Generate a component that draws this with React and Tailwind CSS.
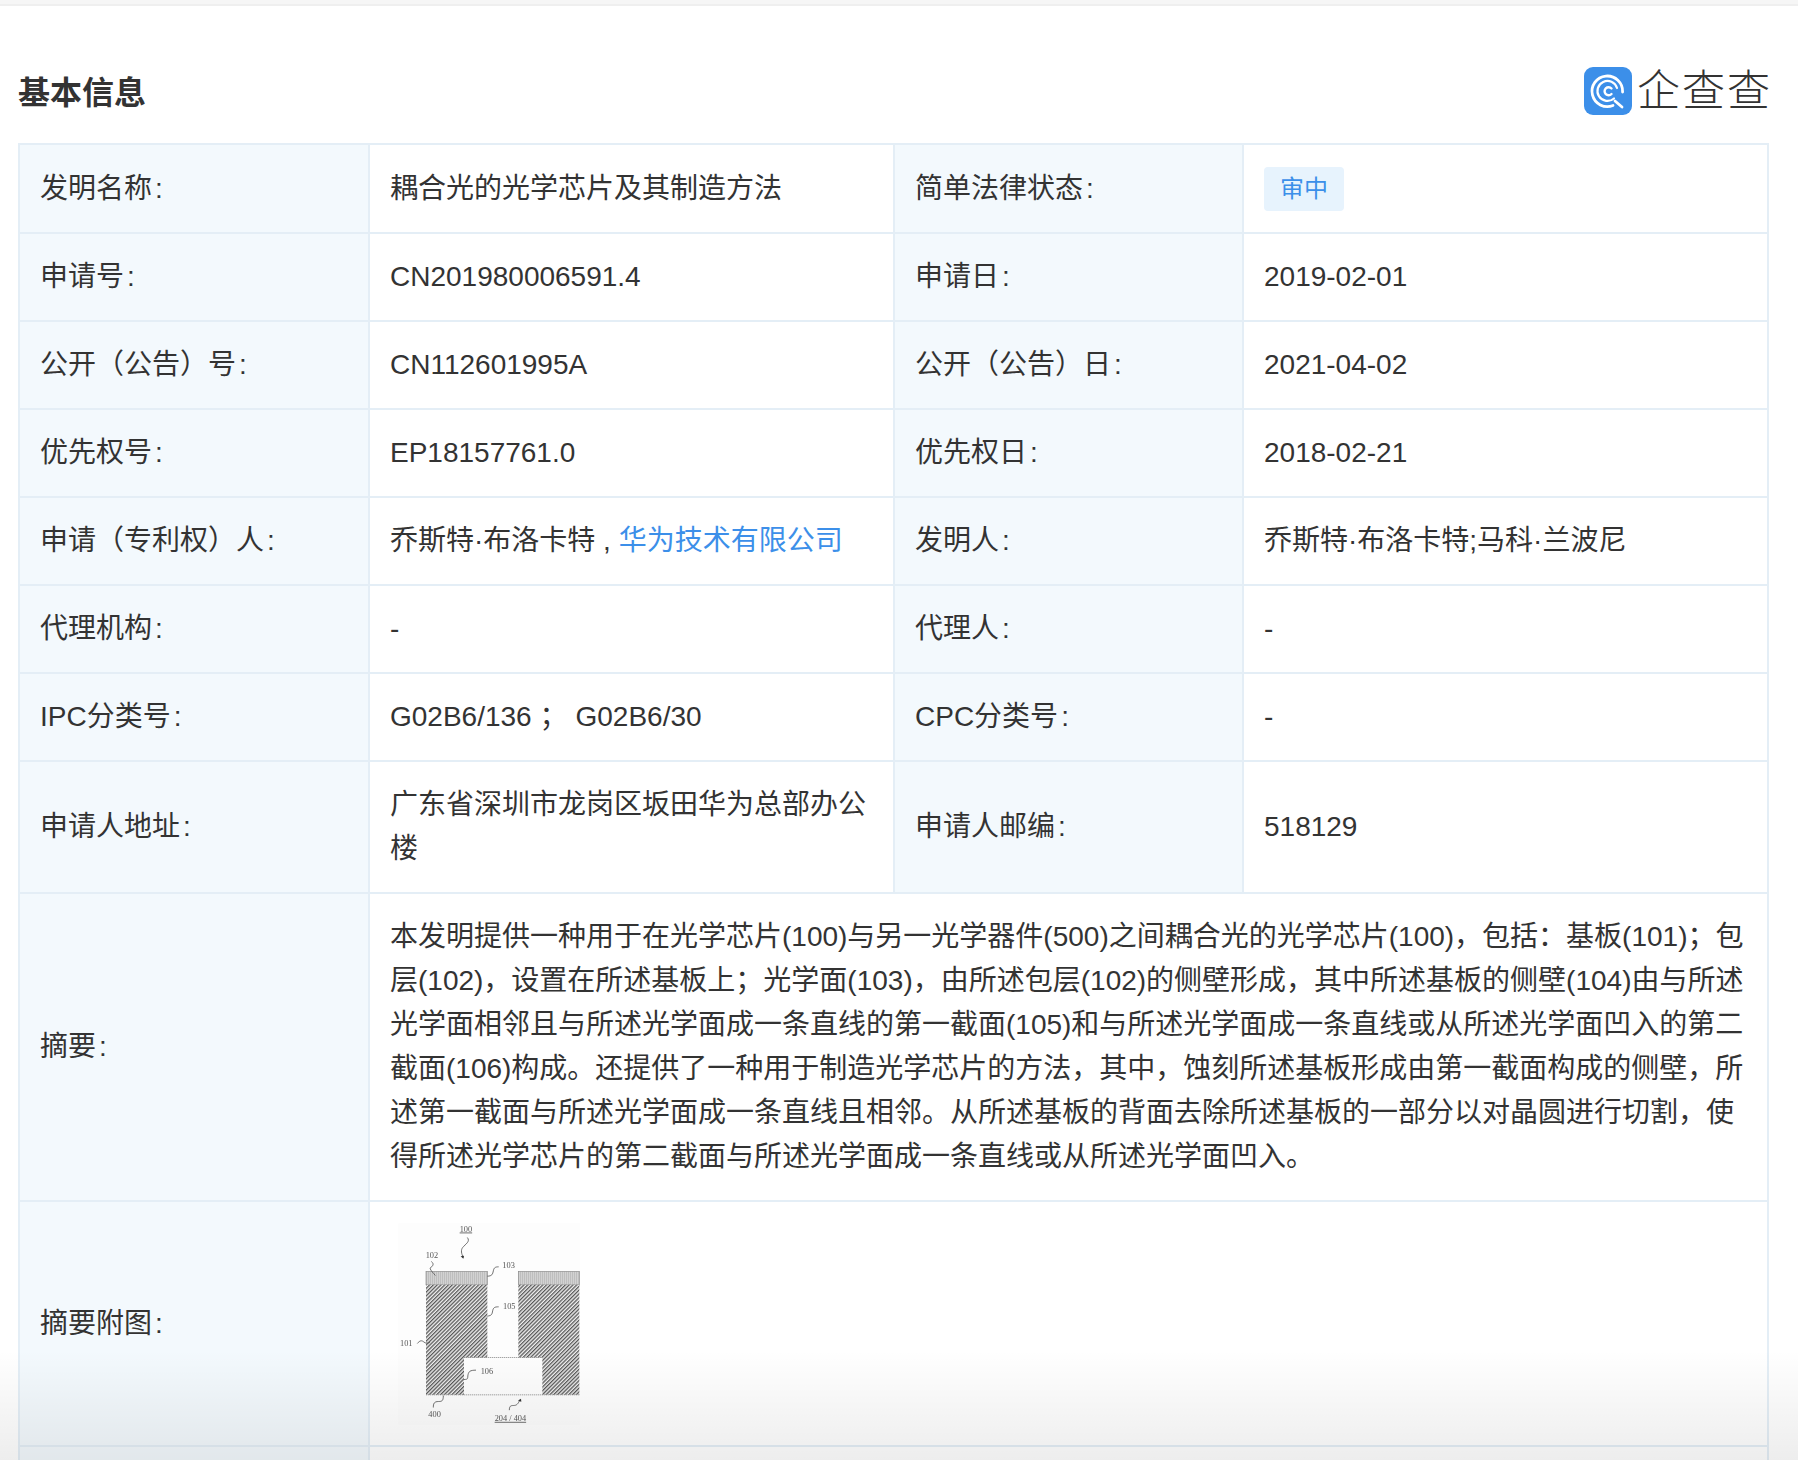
const cjk = "font-['Liberation_Sans','Noto_Sans_CJK_SC',sans-serif]";

function Label({ children }) {
  return (
    <div className="flex items-center border-r-2 border-[#e4eef6] bg-[#f3f9fd] px-5 py-[21px]">
      <span>
        {children}
        <span className="ml-[3px]">:</span>
      </span>
    </div>
  );
}

function Value({ children, last }) {
  return (
    <div className={`flex items-center px-5 py-[21px] ${last ? '' : 'border-r-2 border-[#e4eef6]'}`}>
      <div className="min-w-0">{children}</div>
    </div>
  );
}

// 四列行
function Row({ a, b, c, d }) {
  return (
    <div className="grid grid-cols-[350px_525px_349px_1fr] border-b-2 border-[#e4eef6]">
      <Label>{a}</Label>
      <Value>{b}</Value>
      <Label>{c}</Label>
      <Value last>{d}</Value>
    </div>
  );
}

function Logo() {
  return (
    <div className="mb-[1px] flex items-center">
      <svg width="48" height="48" viewBox="0 0 48 48" fill="none">
        <rect width="48" height="48" rx="9" fill="#3c8fe9" />
        <path d="M29 38.5A15.3 15.3 0 1 1 38.6 25" stroke="#fff" strokeWidth="2.8" strokeLinecap="round" />
        <path d="M31 34l7 6" stroke="#fff" strokeWidth="2.8" strokeLinecap="round" />
        <path d="M30 31.5A10 10 0 1 1 33 21" stroke="#fff" strokeWidth="2.2" strokeLinecap="round" />
        <path d="M27.5 21.5A4 4 0 1 0 27.5 27" stroke="#fff" strokeWidth="2.4" strokeLinecap="round" />
      </svg>
      <span className="ml-[5px] text-[43px] font-light leading-[48px] tracking-[2px] text-[#333]">企查查</span>
    </div>
  );
}

function Figure() {
  return (
    <svg width="190" height="202" viewBox="90 95 570 605" className="blur-[0.3px]">
      <defs>
        <pattern id="hatch" width="8" height="8" patternUnits="userSpaceOnUse" patternTransform="rotate(-45)">
          <rect width="8" height="8" fill="#f0f0f0" />
          <rect width="8" height="3.8" fill="#555" />
        </pattern>
        <pattern id="dots" width="6" height="6" patternUnits="userSpaceOnUse">
          <rect width="6" height="6" fill="#d2d2d2" />
          <rect width="2" height="6" fill="#b4b4b4" />
        </pattern>
      </defs>
      <rect x="115" y="95" width="545" height="605" fill="#fdfdfd" />
      <rect x="198" y="240" width="184" height="40" fill="url(#dots)" stroke="#888" strokeWidth="2" />
      <rect x="475" y="240" width="183" height="40" fill="url(#dots)" stroke="#888" strokeWidth="2" />
      <path d="M198 280H382V498H312V610H198Z" fill="url(#hatch)" />
      <path d="M475 280H658V610H547V498H475Z" fill="url(#hatch)" />
      <path d="M198 610H658M312 498H547" stroke="#777" strokeWidth="2" strokeDasharray="4 2" />
      <g stroke="#555" strokeWidth="2.5" fill="none">
        <path d="M322 138c10 12-6 20-14 30-6 8-4 18 2 30" />
        <path d="M214 210c10 8 4 14-4 20 2 8 10 14 16 22" />
        <path d="M382 254c14 0 16-6 18-16 2-10 6-12 16-12" />
        <path d="M382 374c14-2 14-6 16-16 2-10 6-12 18-12" />
        <path d="M312 564c14 0 10-4 12-14 2-10 6-14 24-14" />
        <path d="M172 456c8-10 14-10 20-4 6 4 12 4 18 0" />
        <path d="M250 612c0 16-4 18-14 18-14 0-16 6-16 18" />
        <path d="M448 656c0-12 4-14 12-14 10 0 14-4 20-18" />
      </g>
      <path d="M302 194l8 8 2-9ZM474 628l9-6 1 9Z" fill="#333" />
      <g fill="#555" fontSize="25" fontFamily="Liberation Serif, serif">
        <text x="299" y="120" textDecoration="underline">100</text>
        <text x="197" y="200">102</text>
        <text x="427" y="230">103</text>
        <text x="429" y="352">105</text>
        <text x="120" y="462">101</text>
        <text x="362" y="546">106</text>
        <text x="205" y="675">400</text>
        <text x="404" y="688" textDecoration="underline">204 / 404</text>
      </g>
    </svg>
  );
}

export default function App() {
  return (
    <div lang="zh-CN" className={`relative h-[1460px] overflow-hidden bg-white text-[28px] leading-[44px] text-[#333] ${cjk}`}>
      <div className="h-[6px] border-b-2 border-[#efefef] bg-[#f6f6f6]" />
      <div className="flex items-center justify-between pb-[26px] pl-[18px] pr-[26px] pt-[60px]">
        <h2 className="pt-[3px] text-[32px] font-bold leading-[48px] text-[#333]">基本信息</h2>
        <Logo />
      </div>
      <div className="mx-[18px] w-[1751px] border-x-2 border-t-2 border-[#e4eef6]">
        <Row
          a="发明名称"
          b="耦合光的光学芯片及其制造方法"
          c="简单法律状态"
          d={<span className="inline-block rounded-[4px] bg-[#e7f3fd] px-4 text-[24px] text-[#3c8fe9]">审中</span>}
        />
        <Row a="申请号" b="CN201980006591.4" c="申请日" d="2019-02-01" />
        <Row a="公开（公告）号" b="CN112601995A" c="公开（公告）日" d="2021-04-02" />
        <Row a="优先权号" b="EP18157761.0" c="优先权日" d="2018-02-21" />
        <Row
          a="申请（专利权）人"
          b={<>乔斯特·布洛卡特 , <span className="text-[#3c8fe9]">华为技术有限公司</span></>}
          c="发明人"
          d="乔斯特·布洛卡特;马科·兰波尼"
        />
        <Row a="代理机构" b="-" c="代理人" d="-" />
        <Row a="IPC分类号" b={<>G02B6/136 ；<span className="ml-2">G02B6/30</span></>} c="CPC分类号" d="-" />
        <Row a="申请人地址" b="广东省深圳市龙岗区坂田华为总部办公楼" c="申请人邮编" d="518129" />
        <div className="grid grid-cols-[350px_1fr] border-b-2 border-[#e4eef6]">
          <Label>摘要</Label>
          <div className="px-5 py-[21px]">
            本发明提供一种用于在光学芯片(100)与另一光学器件(500)之间耦合光的光学芯片(100)，包括：基板(101)；包层(102)，设置在所述基板上；光学面(103)，由所述包层(102)的侧壁形成，其中所述基板的侧壁(104)由与所述光学面相邻且与所述光学面成一条直线的第一截面(105)和与所述光学面成一条直线或从所述光学面凹入的第二截面(106)构成。还提供了一种用于制造光学芯片的方法，其中，蚀刻所述基板形成由第一截面构成的侧壁，所述第一截面与所述光学面成一条直线且相邻。从所述基板的背面去除所述基板的一部分以对晶圆进行切割，使得所述光学芯片的第二截面与所述光学面成一条直线或从所述光学面凹入。
          </div>
        </div>
        <div className="grid h-[245px] grid-cols-[350px_1fr] border-b-2 border-[#e4eef6]">
          <Label>摘要附图</Label>
          <div className="flex items-center px-5">
            <Figure />
          </div>
        </div>
        <div className="grid h-[60px] grid-cols-[350px_1fr]">
          <div className="border-r-2 border-[#e4eef6] bg-[#f3f9fd]" />
          <div />
        </div>
      </div>
      {/* 底部渐变遮罩 */}
      <div className="pointer-events-none absolute inset-x-0 bottom-0 h-[110px] bg-gradient-to-b from-[#00000000] to-[#00000012]" />
    </div>
  );
}
